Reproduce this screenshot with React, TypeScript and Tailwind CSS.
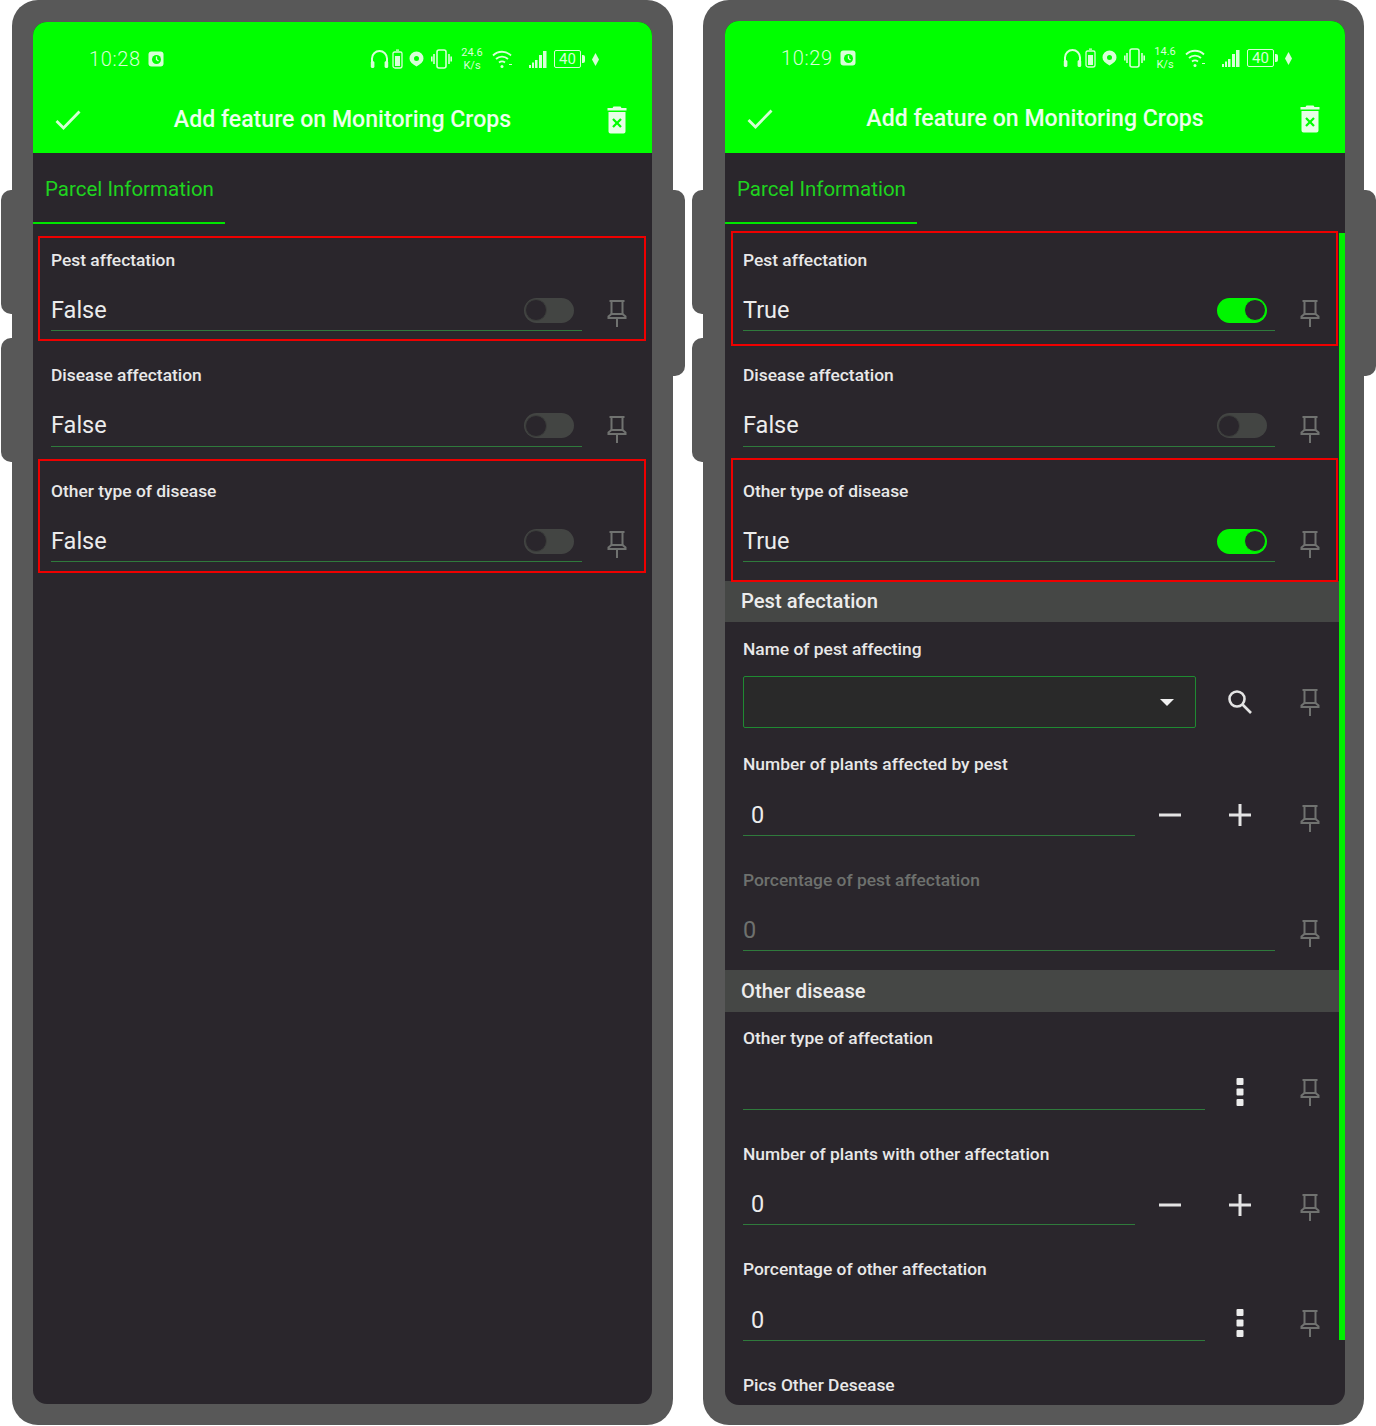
import type { ReactNode } from "react";

const PinIcon = () => (
  <svg width="20" height="29" viewBox="0 0 20 29" fill="none" stroke="#707270" strokeWidth="2">
    <path d="M2.500 2h15M4.500 2v13M15.500 2v13" />
    <path d="M4.500 15 1.500 17.500v1.500h17v-1.500l-3-2.500z" />
    <path d="M10 19v9" />
  </svg>
);

const CheckIcon = () => (
  <svg width="26" height="20" viewBox="0 0 26 20" fill="none" stroke="#d4ffd4" strokeWidth="2.800">
    <path d="M1.500 11 8.500 18 24.500 1.500" />
  </svg>
);

const TrashIcon = () => (
  <svg width="20" height="28" viewBox="0 0 20 28" fill="#e6ffe6">
    <path d="M6.500 0.500h7l1 1.500H19.500v2.500H0.500V2H5.500z" />
    <path
      fillRule="evenodd"
      d="M1.500 6h17v19.500a2 2 0 0 1-2 2h-13a2 2 0 0 1-2-2zM6.800 12.200l-1.600 1.600 3.200 3.200-3.200 3.200 1.600 1.600 3.200-3.200 3.200 3.200 1.600-1.600-3.200-3.200 3.200-3.200-1.600-1.600-3.200 3.200z"
    />
  </svg>
);

const SearchIcon = () => (
  <svg width="26" height="26" viewBox="0 0 26 26" fill="none" stroke="#e4e4e4" strokeWidth="2.600">
    <circle cx="10" cy="10" r="7.500" />
    <path d="m15.500 15.500 8.500 8.500" />
  </svg>
);

const MinusIcon = () => (
  <svg className="mb-[4px]" width="22" height="22" viewBox="0 0 22 22" fill="none" stroke="#e4e4e4" strokeWidth="3">
    <path d="M0 11h22" />
  </svg>
);

const PlusIcon = () => (
  <svg className="mb-[4px]" width="22" height="22" viewBox="0 0 22 22" fill="none" stroke="#e4e4e4" strokeWidth="3">
    <path d="M0 11h22M11 0v22" />
  </svg>
);

const DotsIcon = () => (
  <svg className="mt-[2px]" width="8" height="28" viewBox="0 0 8 28" fill="#ececec">
    <rect x="0.500" y="0" width="7" height="7" rx="1" />
    <rect x="0.500" y="10.500" width="7" height="7" rx="1" />
    <rect x="0.500" y="21" width="7" height="7" rx="1" />
  </svg>
);

const AlarmIcon = () => (
  <svg width="16" height="16" viewBox="0 0 16 16">
    <rect x="0.500" y="0.500" width="15" height="15" rx="3" fill="#d8ffd8" />
    <circle cx="8.500" cy="8.500" r="4.500" fill="#00ff00" />
    <path d="M8.500 5.500v3l2 1.500" fill="none" stroke="#d8ffd8" strokeWidth="1.300" />
  </svg>
);

const StatusIcons = ({ speed }: { speed: string }) => (
  <div className="flex items-center text-[#d8ffd8]">
    <svg width="19" height="20" viewBox="0 0 19 20" fill="none" stroke="currentColor" strokeWidth="2">
      <path d="M2 14V9.500a7.500 7.500 0 0 1 15 0V14" />
      <rect x="0.800" y="12" width="3.600" height="7" rx="1.600" fill="currentColor" stroke="none" />
      <rect x="14.600" y="12" width="3.600" height="7" rx="1.600" fill="currentColor" stroke="none" />
    </svg>
    <svg className="ml-[3px]" width="11" height="20" viewBox="0 0 11 20" fill="none" stroke="currentColor" strokeWidth="1.300">
      <path d="M4 1.200h3M1 4.500a1.500 1.500 0 0 1 1.500-1.500h6A1.500 1.500 0 0 1 10 4.500v12.500a2 2 0 0 1-2 2H3a2 2 0 0 1-2-2z" />
      <rect x="3" y="7" width="5" height="10" fill="currentColor" stroke="none" />
    </svg>
    <svg className="ml-[6px]" width="15" height="16" viewBox="0 0 15 16">
      <path
        fillRule="evenodd"
        fill="currentColor"
        d="M7.500 0.500a7 7 0 0 1 7 7c0 3-2.500 5.500-7 8-4.500-2.500-7-5-7-8a7 7 0 0 1 7-7zM7.500 5a2.500 2.500 0 1 0 0 5 2.500 2.500 0 0 0 0-5z"
      />
    </svg>
    <svg className="ml-[7px]" width="21" height="20" viewBox="0 0 21 20" fill="none" stroke="currentColor" strokeWidth="1.600">
      <rect x="6" y="1" width="9" height="18" rx="2" />
      <path d="M3 5v10M18 5v10M0.800 7.500v5M20.200 7.500v5" />
    </svg>
    <div className="ml-[7px] flex w-[26px] flex-col items-center text-[11px] leading-[13px] font-['Roboto',sans-serif]">
      <span>{speed}</span>
      <span>K/s</span>
    </div>
    <svg className="ml-[7px]" width="21" height="20" viewBox="0 0 21 20" fill="none" stroke="currentColor" strokeWidth="1.800">
      <path d="M1 6.500C6 1.500 14 1.500 19 6.500M4 10c3.500-3.200 8.500-3.200 12 0M7 13.500c2-1.500 4-1.500 6 0" />
      <circle cx="10" cy="17.500" r="1.500" fill="currentColor" stroke="none" />
      <path d="M17 15.500h3" strokeWidth="1.200" />
    </svg>
    <svg className="ml-[16px]" width="18" height="18" viewBox="0 0 18 18" fill="currentColor">
      <rect x="0" y="15" width="2" height="3" />
      <rect x="3" y="12.500" width="2" height="5.500" />
      <rect x="6" y="10" width="2.500" height="8" />
      <rect x="10" y="5" width="3" height="13" />
      <rect x="14" y="1" width="3.500" height="17" />
    </svg>
    <div className="ml-[7px] flex items-center">
      <span className="flex h-[18px] w-[27px] items-center justify-center rounded-[2px] border border-[#d8ffd8] text-[15px] leading-none font-['Roboto',sans-serif]">
        40
      </span>
      <span className="ml-px h-[8px] w-[3px] rounded-r-[2px] bg-[#d8ffd8]" />
    </div>
    <svg className="ml-[7px]" width="7" height="13" viewBox="0 0 7 13" fill="currentColor">
      <path d="M3.500 0 7 6.500 3.500 13 0 6.500z" />
    </svg>
  </div>
);

const Toggle = ({ on }: { on: boolean }) =>
  on ? (
    <div className="flex h-[25px] w-[50px] items-center justify-end rounded-full bg-[#00f500] pr-[1px]">
      <span className="h-[22px] w-[22px] rounded-full border-[1.500px] border-[#00f500] bg-[#2a262c]" />
    </div>
  ) : (
    <div className="flex h-[25px] w-[50px] items-center rounded-full bg-[#434543] pl-[1px]">
      <span className="h-[22px] w-[22px] rounded-full border-[1.500px] border-[#3c3e3c] bg-[#2a262c]" />
    </div>
  );

const Frame = ({ className }: { className: string }) => (
  <div className={`pointer-events-none absolute border-2 border-[#ee0000] ${className}`} />
);

type RowProps = {
  label: string;
  value?: string;
  muted?: boolean;
  toggle?: "on" | "off";
  combo?: boolean;
  actions?: ReactNode[];
  indent?: boolean;
  frame?: string;
};

const Row = ({ label, value, muted, toggle, combo, actions = [], indent, frame }: RowProps) => (
  <div className="relative h-[115.600px] shrink-0">
    {frame && <Frame className={frame} />}
    <div
      className={`flex h-[54px] items-start pl-[18px] pt-[14.500px] text-[17.400px] leading-[24px] font-medium ${
        muted ? "text-[#6e716e]" : "text-[#e8e8e8]"
      }`}
    >
      {label}
    </div>
    <div className="flex h-[44px]">
      {combo ? (
        <div className="ml-[18px] flex h-[52px] w-[453px] items-center justify-end rounded-[2px] border border-[#1f8a32] bg-[#292929] pr-[21px]">
          <span className="h-0 w-0 border-x-[7px] border-t-[7px] border-x-transparent border-t-[#f0f0f0]" />
        </div>
      ) : (
        <div
          className={`ml-[18px] flex min-w-0 flex-1 items-center justify-between border-b border-[#2f7a3c] text-[23.500px] leading-none ${
            indent ? "pl-[8px]" : ""
          } ${muted ? "text-[#6e716e]" : "text-[#ececec]"}`}
        >
          <span className="mt-[4px]">{value}</span>
          {toggle && (
            <span className="mr-[8px] mt-[3px]">
              <Toggle on={toggle === "on"} />
            </span>
          )}
        </div>
      )}
      {combo && <span className="w-[9px]" />}
      {actions.map((a, i) => (
        <div key={i} className="flex h-[48px] w-[70px] shrink-0 items-center justify-center pt-[3px]">
          {a}
        </div>
      ))}
      <div className="flex h-[50px] w-[70px] shrink-0 items-center justify-center pt-[3px]">
        <PinIcon />
      </div>
    </div>
  </div>
);

const SectionHeader = ({ title, className }: { title: string; className: string }) => (
  <div
    className={`flex h-[41.500px] shrink-0 items-center bg-[#454745] pl-[16px] text-[20.200px] font-medium text-[#ececec] ${className}`}
  >
    {title}
  </div>
);

const SideKey = ({ className }: { className: string }) => (
  <div className={`w-[12px] bg-[#585858] ${className}`} />
);

const Phone = ({
  time,
  speed,
  bodyClass,
  screenClass,
  barClass,
  children,
}: {
  time: string;
  speed: string;
  bodyClass: string;
  screenClass: string;
  barClass: string;
  children: ReactNode;
}) => (
  <div className="flex shrink-0">
    <div className="flex w-[11px] flex-col gap-[24px] pt-[190px]">
      <SideKey className="ml-auto h-[124px] w-[11px] rounded-l-[10px]" />
      <SideKey className="ml-auto h-[124px] w-[11px] rounded-l-[10px]" />
    </div>
    <div className={`flex h-[1425px] w-[661px] flex-col rounded-[26px] bg-[#585858] ${bodyClass}`}>
      <div className={`relative flex flex-col overflow-hidden rounded-[14px] bg-[#2a262c] ${screenClass}`}>
        <div className={`flex shrink-0 flex-col bg-[#00ff00] ${barClass}`}>
          <div className="flex h-[36px] items-center pl-[56px] pr-[53px] text-[#d8ffd8]">
            <span className="text-[20px] font-light tracking-[0.600px] font-['Roboto',sans-serif]">{time}</span>
            <span className="ml-[7px]">
              <AlarmIcon />
            </span>
            <span className="ml-auto">
              <StatusIcons speed={speed} />
            </span>
          </div>
          <div className="mt-[13px] flex h-[60px] items-center">
            <div className="flex w-[70px] justify-center">
              <CheckIcon />
            </div>
            <div className="flex-1 text-center text-[23.100px] font-medium text-[#ecffec]">Add feature on Monitoring Crops</div>
            <div className="flex w-[70px] justify-center">
              <TrashIcon />
            </div>
          </div>
        </div>
        <div className="flex h-[71px] shrink-0 flex-col">
          <div className="flex h-[69px] w-[192px] items-center whitespace-nowrap pl-[12px] pt-[4px] text-[20.500px] text-[#1fd41f]">
            Parcel Information
          </div>
          <div className="h-[2px] w-[192px] bg-[#00e600]" />
        </div>
        <div className="flex flex-1 flex-col pt-[9px]">{children}</div>
      </div>
    </div>
    <div className="w-[12px] pt-[190px]">
      <SideKey className="h-[186px] rounded-r-[10px]" />
    </div>
  </div>
);

export default function App() {
  return (
    <div className="flex h-[1426px] w-[1376px] gap-[7px] overflow-hidden bg-white pl-[1px] font-['Roboto',sans-serif]">
      <Phone
        time="10:28"
        speed="24.6"
        bodyClass="pl-[21px] pr-[21px] pt-[22px]"
        screenClass="h-[1382px]"
        barClass="h-[131px] pt-[19px]"
      >
        <Row label="Pest affectation" value="False" toggle="off" frame="left-[5px] right-[6px] top-[3px] bottom-[8px]" />
        <Row label="Disease affectation" value="False" toggle="off" />
        <Row label="Other type of disease" value="False" toggle="off" frame="left-[5px] right-[6px] top-[-5px] bottom-[7px]" />
      </Phone>
      <Phone
        time="10:29"
        speed="14.6"
        bodyClass="pl-[22px] pr-[19px] pt-[21px]"
        screenClass="h-[1384px]"
        barClass="h-[132px] pt-[19px]"
      >
        <div className="pointer-events-none absolute right-0 top-[212px] z-10 h-[1107px] w-[6px] bg-[#00ee00]" />
        <Row label="Pest affectation" value="True" toggle="on" frame="left-[6px] right-[7px] top-[-2px] bottom-[3px]" />
        <Row label="Disease affectation" value="False" toggle="off" />
        <Row label="Other type of disease" value="True" toggle="on" frame="left-[6px] right-[7px] top-[-6px] bottom-[-2px]" />
        <SectionHeader title="Pest afectation" className="mt-[1px]" />
        <Row label="Name of pest affecting" combo actions={[<SearchIcon key="s" />]} />
        <Row label="Number of plants affected by pest" value="0" indent actions={[<MinusIcon key="m" />, <PlusIcon key="p" />]} />
        <Row label="Porcentage of pest affectation" value="0" muted />
        <SectionHeader title="Other disease" className="mt-[1px]" />
        <Row label="Other type of affectation" actions={[<DotsIcon key="d" />]} />
        <Row label="Number of plants with other affectation" value="0" indent actions={[<MinusIcon key="m" />, <PlusIcon key="p" />]} />
        <Row label="Porcentage of other affectation" value="0" indent actions={[<DotsIcon key="d" />]} />
        <Row label="Pics Other Desease" />
      </Phone>
    </div>
  );
}
